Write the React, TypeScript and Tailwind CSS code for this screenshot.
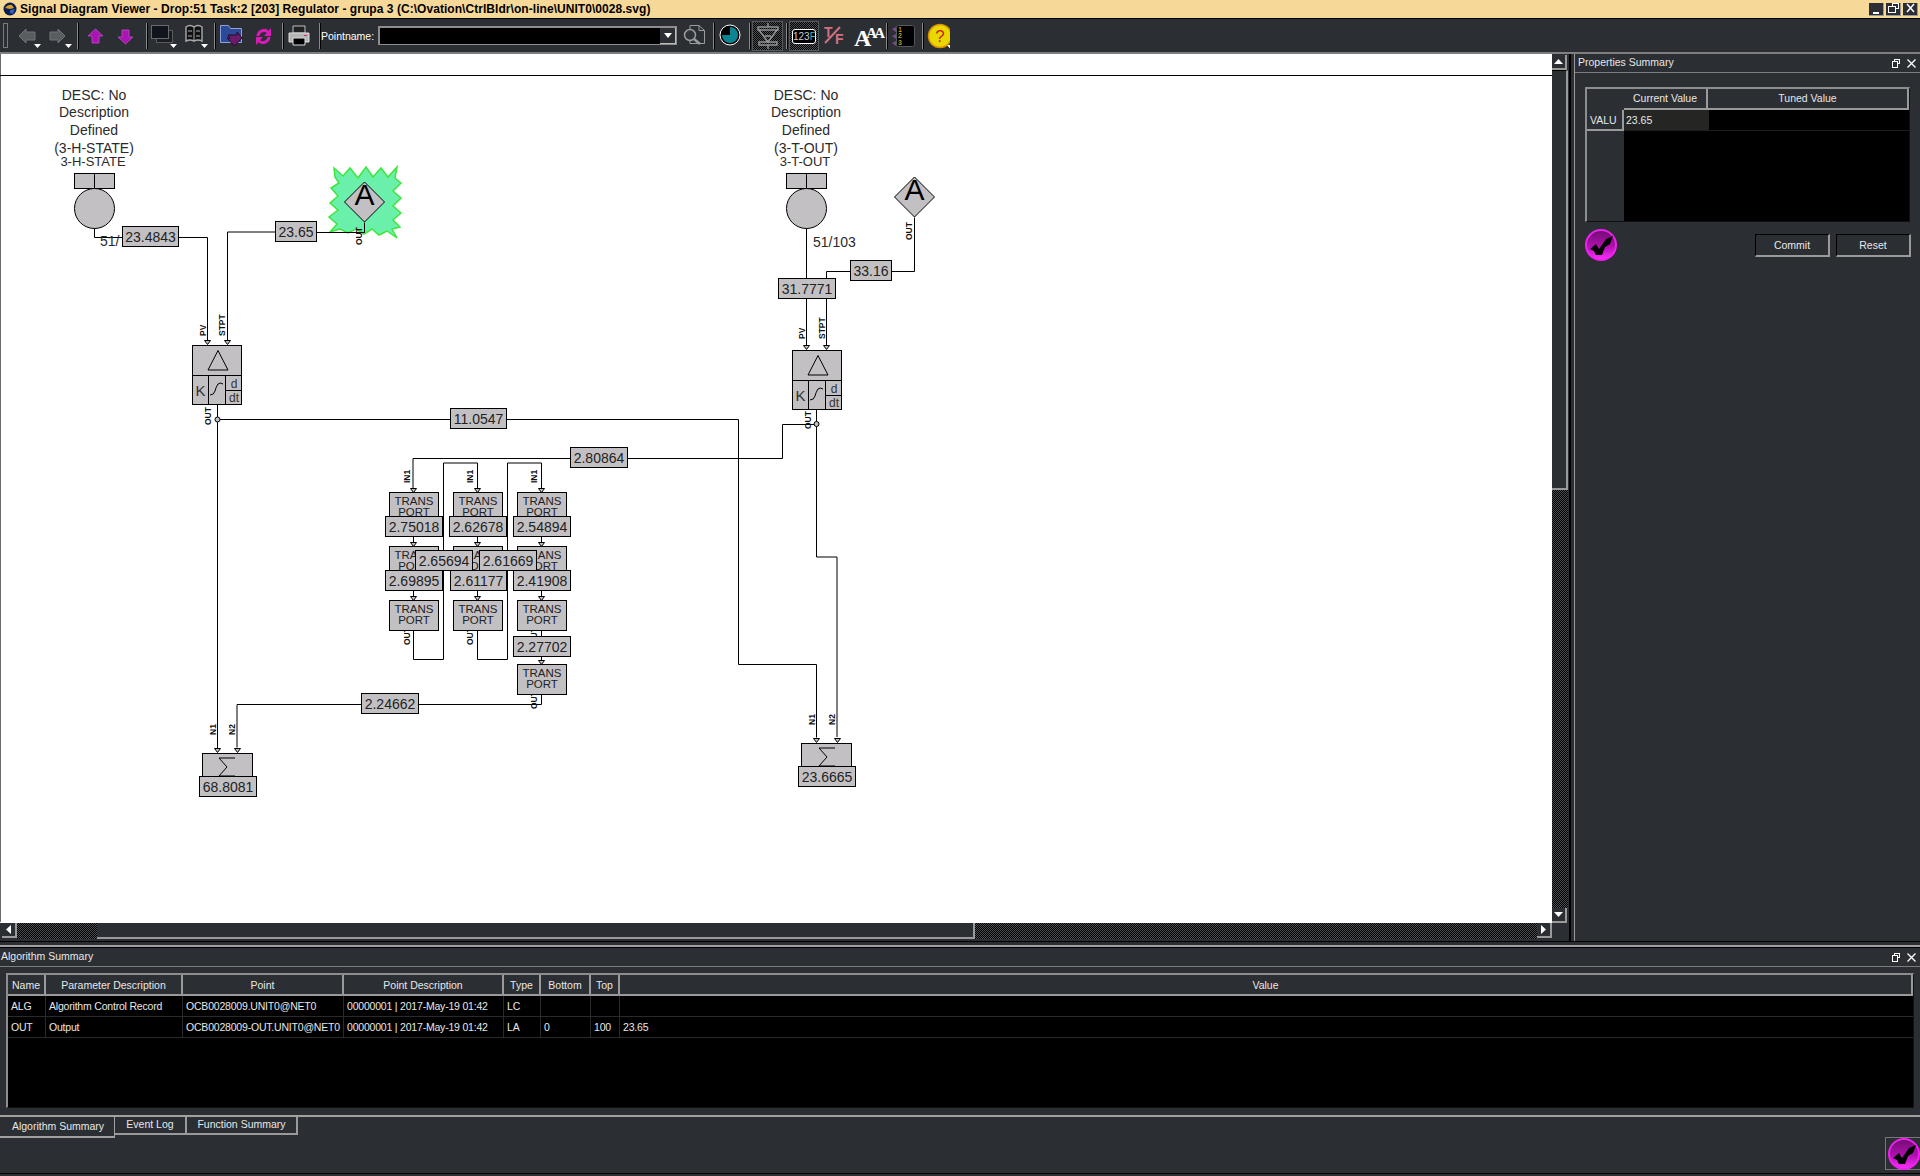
import React from 'react';

const ui = "font-['Liberation_Sans',Arial,sans-serif]";

function TitleBtn({ kind }: { kind: 'min' | 'max' | 'close' }) {
  return (
    <div className="w-[15px] h-[13px] bg-[#2b2e33] border-r border-b border-[#9a9a9a] flex items-center justify-center">
      <svg width="13" height="11" viewBox="0 0 13 11" fill="none" stroke="#fff" strokeWidth="1.5" shapeRendering="crispEdges">
        {kind === 'min' && <path d="M3 9.5h6" strokeWidth="2" />}
        {kind === 'max' && <path d="M5.5 3V.5h6v5H9M1.5 3.5h7v6h-7z" />}
        {kind === 'close' && <path d="M3 1l7 8M10 1L3 9" shapeRendering="auto" />}
      </svg>
    </div>
  );
}

function Sep() {
  return <div className="w-[1px] h-[26px] bg-[#8a8a8a] border-r border-black box-content" />;
}

function Caret() {
  return <path d="M0 0h7l-3.5 4z" fill="#fff" />;
}

function Toolbar() {
  return (
    <div className="h-[35px] bg-[#2b2e33] relative flex items-center shrink-0 border-b-2 border-[#7f7f7f]">
      <div className="absolute left-[3px] top-[4px] w-[5px] h-[25px] border border-[#7a7a7a]" />
      <svg className="absolute left-0 top-0" width="720" height="31" viewBox="0 19 720 31">
        {/* back / forward */}
        <path d="M19 36l7-7v3h9v8h-9v3z" fill="#5a5d60" stroke="#72757a" />
        <path d="M65 36l-7-7v3h-8v8h8v3z" fill="#5a5d60" stroke="#72757a" />
        <g transform="translate(34 44)"><Caret /></g>
        <g transform="translate(65 44)"><Caret /></g>
        {/* up / down */}
        <path d="M95.5 29l7.5 7h-4v7h-7v-7h-4z" fill="#a815b0" stroke="#d050d8" strokeWidth="0.7" />
        <path d="M125.5 44l7.5-7h-4v-7h-7v7h-4z" fill="#a815b0" stroke="#d050d8" strokeWidth="0.7" />
        {/* windows */}
        <rect x="156.5" y="30.5" width="16" height="12" fill="#1b1d22" stroke="#585b5e" />
        <rect x="151.5" y="25.5" width="17" height="13" fill="#11141c" stroke="#686b6e" />
        <g transform="translate(170 44)"><Caret /></g>
        {/* book */}
        <path d="M186 27q4-3 8 0q4-3 8 0v14q-4-2-8 0q-4-2-8 0z" fill="#111" stroke="#a9abad" strokeWidth="1.4" />
        <path d="M194 27v14M188 31h4M196 31h4M188 36h4M196 36h4" stroke="#a9abad" />
        <g transform="translate(201 44)"><Caret /></g>
        {/* folder */}
        <path d="M220.5 28.5v-3h8l2 3h11v14h-21z" fill="#2d4a96" stroke="#8fa2dc" />
        <path d="M228 35h9v-3l5 6-7.500 8-7.500-8h3z" fill="#6a1c6a" stroke="#240a24" />
        {/* sync */}
        <g fill="#d81bb8">
          <path d="M258 36a6 6 0 0 1 10-4" fill="none" stroke="#d81bb8" strokeWidth="3" />
          <path d="M271 28v8h-7z" />
          <path d="M269 37a6 6 0 0 1-10 4" fill="none" stroke="#d81bb8" strokeWidth="3" />
          <path d="M256 45v-8h7z" />
        </g>
        {/* printer */}
        <path d="M293 26h12v7h-12z" fill="#222" stroke="#c0c0c0" />
        <path d="M289 33h20v9h-20z" fill="#b5b5b5" stroke="#ddd" />
        <path d="M293 38h12v7h-12z" fill="#000" stroke="#ddd" />
        <rect x="304" y="35" width="3" height="1" fill="#d03080" />
      </svg>
      <div className="absolute left-[77px] top-[4px]"><Sep /></div>
      <div className="absolute left-[146px] top-[4px]"><Sep /></div>
      <div className="absolute left-[214px] top-[4px]"><Sep /></div>
      <div className="absolute left-[282px] top-[4px]"><Sep /></div>
      <div className="absolute left-[319px] top-[4px]"><Sep /></div>
      <span className={`absolute left-[321px] top-[10px] text-[10.5px] leading-[14px] text-white ${ui}`}>Pointname:</span>
      <div className="absolute left-[378px] top-[7px] w-[299px] h-[19px] bg-black border-t-2 border-l-2 border-[#8d8d8d] border-r border-b flex justify-end">
        <div className="w-[16px] h-[16px] bg-[#2b2e33] border-r border-b border-[#bbb] flex items-center justify-center">
          <svg width="8" height="5"><path d="M0 0h8l-4 5z" fill="#fff" /></svg>
        </div>
      </div>
      <svg className="absolute left-[680px] top-0" width="270" height="31" viewBox="680 19 270 31">
        {/* find */}
        <path d="M690 25.500h9l5.500 5v13h-14.500z" fill="#2b2e33" stroke="#9a9c9f" />
        <path d="M699 25.500v5h5.500" fill="none" stroke="#9a9c9f" />
        <circle cx="690" cy="35" r="5.500" fill="#30343a" stroke="#9a9c9f" strokeWidth="1.5" />
        <path d="M694 39l6 5" stroke="#9a9c9f" strokeWidth="2.500" />
        {/* clock */}
        <circle cx="730" cy="35" r="10" fill="#000" stroke="#fff" strokeWidth="1" />
        <path d="M730 35v-8a8 8 0 1 1-8 8z" fill="#0c8492" />
      </svg>
      <div className="absolute left-[713px] top-[4px]"><Sep /></div>
      <div className="absolute left-[749px] top-[4px]"><Sep /></div>
      <div className="absolute left-[752px] top-[2px] w-[31px] h-[30px] border border-[#55585c] bg-[repeating-conic-gradient(#000_0_25%,#4a4d52_0_50%)] bg-[length:2px_2px] flex items-center justify-center">
        <svg width="24" height="26" viewBox="0 0 24 26" fill="none" stroke="#9a9a9a" strokeWidth="1.4">
          <path d="M12 0v4M12 22v4" />
          <rect x="2" y="4" width="20" height="3" />
          <rect x="3" y="19" width="18" height="3" />
          <path d="M3 7l9 12L21 7M9 13h6" />
        </svg>
      </div>
      <div className="absolute left-[786px] top-[4px]"><Sep /></div>
      <div className="absolute left-[789px] top-[2px] w-[30px] h-[30px] border border-[#55585c] bg-[repeating-conic-gradient(#000_0_25%,#4a4d52_0_50%)] bg-[length:2px_2px] flex items-center justify-center">
        <div className={`w-[24px] h-[15px] rounded-[3px] border border-white bg-black text-[10px] leading-[13px] text-center text-[#ccc] ${ui}`}>
          123<span className="text-[#3fb7b7]">F</span>
        </div>
      </div>
      <svg className="absolute left-[820px] top-0" width="130" height="31" viewBox="820 19 130 31" fontFamily="Liberation Serif, serif">
        <text x="824" y="37" fontSize="14" fontWeight="700" fill="#d07080" fontFamily="Liberation Sans, sans-serif">T</text>
        <path d="M825 43l15-16" stroke="#d07080" strokeWidth="2" />
        <text x="835" y="44" fontSize="14" fontWeight="700" fill="#d07080" fontFamily="Liberation Sans, sans-serif">F</text>
        <text x="854" y="46" fontSize="24" fontWeight="700" fill="#fff" letterSpacing="-5">
          A<tspan fontSize="15" dy="-8" letterSpacing="-3">AA</tspan>
        </text>
        {/* numbered list */}
        <rect x="896.500" y="25.500" width="18" height="21" rx="2" fill="#000" stroke="#55585c" />
        <g fill="#7a4a8a"><path d="M892 29l4-2v5zM892 36l4-2v5zM892 43l4-2v5z" /></g>
        <g fontFamily="Liberation Sans, sans-serif" fontSize="7" fontWeight="700" fill="#b8962a">
          <text x="898" y="32">1</text>
          <text x="898" y="38">2</text>
          <text x="898" y="45">3</text>
        </g>
        {/* help */}
        <circle cx="940" cy="36" r="11.500" fill="#e8d800" stroke="#d89000" strokeWidth="1.500" />
        <text x="940" y="42" textAnchor="middle" fontSize="17" fill="#d01818" fontFamily="Liberation Sans, sans-serif">?</text>
        <g transform="translate(947 45)"><Caret /></g>
      </svg>
      <div className="absolute left-[886px] top-[4px]"><Sep /></div>
      <div className="absolute left-[922px] top-[4px]"><Sep /></div>
    </div>
  );
}

function ValueBox({ x, y, w, label }: { x: number; y: number; w: number; label: string }) {
  return (
    <g>
      <rect x={x + 0.5} y={y + 0.5} width={w} height={20} fill="#c2c0c2" stroke="#000" />
      <text x={x + w / 2 + 0.5} y={y + 16} textAnchor="middle" fontSize="14" fill="#222">{label}</text>
    </g>
  );
}

function Transport({ x, y, h = 30 }: { x: number; y: number; h?: number }) {
  return (
    <g>
      <rect x={x + 0.5} y={y + 0.5} width={49} height={h} fill="#c2c0c2" stroke="#000" />
      <text x={x + 25} y={y + 13} textAnchor="middle" fontSize="11.500" fill="#222">TRANS</text>
      <text x={x + 25} y={y + 24} textAnchor="middle" fontSize="11.500" fill="#222">PORT</text>
    </g>
  );
}

function Pin({ x, y }: { x: number; y: number }) {
  return <path d={`M${x - 2.5} ${y + 0.5}h6l-3 4z`} fill="#c2c0c2" stroke="#000" strokeWidth="1" />;
}

function VLabel({ x, y, label }: { x: number; y: number; label: string }) {
  return (
    <text transform={`translate(${x} ${y}) rotate(-90)`} fontSize="8.500" fontWeight="700" fill="#111">{label}</text>
  );
}

function Desc({ cx, name }: { cx: number; name: string }) {
  return (
    <g fontSize="14" fill="#2a2a2a" textAnchor="middle">
      <text x={cx} y={100}>DESC: No</text>
      <text x={cx} y={117}>Description</text>
      <text x={cx} y={135}>Defined</text>
      <text x={cx} y={153}>({name})</text>
      <text x={cx - 1} y={166} fontSize="13">{name}</text>
      <rect x={cx - 20 + 0.5} y={173.5} width={40} height={15} fill="#c2c0c2" stroke="#000" />
      <path d={`M${cx + 0.5} 173v16`} stroke="#000" />
      <circle cx={cx + 0.5} cy={208.5} r={20} fill="#c2c0c2" stroke="#000" />
    </g>
  );
}

function Controller({ x, y }: { x: number; y: number }) {
  return (
    <g fill="none" stroke="#000">
      <rect x={x + 0.5} y={y + 0.5} width={49} height={59} fill="#c2c0c2" />
      <path d={`M${x} ${y + 30.500}h50M${x + 16.500} ${y + 30}v29M${x + 33.500} ${y + 30}v29M${x + 34} ${y + 45.500}h16`} />
      <path d={`M${x + 26} ${y + 5.500}l10 19.500h-20z`} />
      <path d={`M${x + 18} ${y + 50}q4 0 5-4t3-7q2-2 5 0`} />
      <text x={x + 8.500} y={y + 51} textAnchor="middle" fontSize="15" fill="#333" stroke="none">K</text>
      <text x={x + 42} y={y + 43} textAnchor="middle" fontSize="12" fill="#333" stroke="none">d</text>
      <text x={x + 42} y={y + 57} textAnchor="middle" fontSize="12" fill="#333" stroke="none">dt</text>
    </g>
  );
}

function Sum({ x, y, sx, sy }: { x: number; y: number; sx: number; sy: number }) {
  return (
    <g>
      <rect x={x + 0.5} y={y + 0.5} width={50} height={30} fill="#c2c0c2" stroke="#000" />
      <path d={`M${sx + 16} ${sy + 1}h-16l8 9-8 9h16`} fill="none" stroke="#000" />
    </g>
  );
}

function Diamond({ cx, cy, baseline }: { cx: number; cy: number; baseline: number }) {
  return (
    <g>
      <path d={`M${cx} ${cy - 20}l20 20-20 20-20-20z`} fill="#c2c0c2" stroke="#000" />
      <text x={cx} y={baseline} textAnchor="middle" fontSize="30" fill="#000">A</text>
    </g>
  );
}

function Diagram() {
  const wires = [
    'M94.5 228v9.500h28', 'M178 237.500h29.500v103', 'M227.500 340v-108h48', 'M316 232.500h48.500v-10',
    'M217.500 404v344', 'M217.500 419.500h521v245h78v73', 'M806.500 228v50', 'M850 271.500h-23.500v7',
    'M891 271.500h23.500v-54', 'M806.500 299v46', 'M826.500 299v46', 'M816.500 409v148h20.500v180',
    'M816.500 424.500h-34v34h-369.500v30', 'M413.500 522v24', 'M477.500 522v24', 'M541.500 522v24',
    'M413.500 576v24', 'M477.500 576v24', 'M541.500 576v24', 'M413.500 630v29.500h30v-196.500h34v25',
    'M477.500 630v29.500h30v-196.500h34v25', 'M541.500 630v6', 'M541.500 657v7', 'M541.500 695v9.500h-124',
    'M361 704.500h-124v43',
  ];
  const glow =
    'M335 177L334 168L343 176L350 168L358 178L366 167L373 177L381 168L388 177L397 167L395 178L401 183L393 191L401 198L393 206L401 213L393 220L400 227L392 229L397 238L387 231L379 235L372 229L364 234L356 229L348 233L340 229L330 232L337 224L329 217L338 210L330 203L338 196L331 188L339 183z';
  return (
    <svg width="1552" height="868" viewBox="0 54 1552 868" fontFamily="Liberation Sans, Arial, sans-serif" className="block">
      <path d="M0.500 54v869" stroke="#6a6a6a" />
      <path d="M0 75.500h1552" stroke="#000" />
      <path d={glow} fill="#6af0aa" stroke="#3de63d" strokeWidth="1.500" />
      <g fill="none" stroke="#000">
        {wires.map((d) => <path key={d} d={d} />)}
      </g>
      <Desc cx={94} name="3-H-STATE" />
      <Desc cx={806} name="3-T-OUT" />
      <text x={100} y={246} fontSize="14" fill="#2a2a2a">51/</text>
      <text x={813} y={247} fontSize="14" fill="#2a2a2a">51/103</text>
      <Diamond cx={364.5} cy={202} baseline={205} />
      <Diamond cx={914.5} cy={197} baseline={200} />
      <Controller x={192} y={345} />
      <Controller x={792} y={350} />
      {[[207, 340], [227, 340], [806, 345], [826, 345], [413, 488], [477, 488], [541, 488], [413, 542], [477, 542], [541, 542], [413, 596], [477, 596], [541, 596], [541, 660], [217, 748], [237, 748], [816, 738], [837, 738]].map(([x, y]) => (
        <Pin key={`${x}-${y}`} x={x} y={y} />
      ))}
      <circle cx={217.5} cy={419.5} r={2.5} fill="#c2c0c2" stroke="#000" />
      <circle cx={816.5} cy={424} r={2.5} fill="#c2c0c2" stroke="#000" />
      <VLabel x={206} y={336} label="PV" />
      <VLabel x={225} y={336} label="STPT" />
      <VLabel x={805} y={339} label="PV" />
      <VLabel x={825} y={339} label="STPT" />
      <VLabel x={211} y={425} label="OUT" />
      <VLabel x={811} y={429} label="OUT" />
      <VLabel x={362} y={245} label="OUT" />
      <VLabel x={912} y={240} label="OUT" />
      {[410, 473, 537].map((x) => <VLabel key={x} x={x} y={483} label="IN1" />)}
      <VLabel x={410} y={645} label="OUT" />
      <VLabel x={473} y={645} label="OUT" />
      <VLabel x={537} y={645} label="OUT" />
      <VLabel x={537} y={709} label="OUT" />
      <VLabel x={216} y={735} label="N1" />
      <VLabel x={235} y={735} label="N2" />
      <VLabel x={815} y={725} label="N1" />
      <VLabel x={835} y={725} label="N2" />
      {[389, 453, 517].flatMap((x) => [492, 546, 600].map((y) => <Transport key={`${x}${y}`} x={x} y={y} />))}
      <Transport x={517} y={664} />
      <Sum x={202} y={753} sx={219} sy={757} />
      <Sum x={801} y={743} sx={819} sy={747} />
      <ValueBox x={122} y={226} w={56} label="23.4843" />
      <ValueBox x={275} y={221} w={41} label="23.65" />
      <ValueBox x={778} y={278} w={57} label="31.7771" />
      <ValueBox x={850} y={260} w={41} label="33.16" />
      <ValueBox x={450} y={408} w={56} label="11.0547" />
      <ValueBox x={570} y={447} w={57} label="2.80864" />
      <ValueBox x={385} y={516} w={57} label="2.75018" />
      <ValueBox x={449} y={516} w={57} label="2.62678" />
      <ValueBox x={513} y={516} w={57} label="2.54894" />
      <ValueBox x={385} y={570} w={57} label="2.69895" />
      <ValueBox x={450} y={570} w={56} label="2.61177" />
      <ValueBox x={513} y={570} w={57} label="2.41908" />
      <ValueBox x={415} y={550} w={57} label="2.65694" />
      <ValueBox x={479} y={550} w={57} label="2.61669" />
      <ValueBox x={513} y={636} w={57} label="2.27702" />
      <ValueBox x={361} y={693} w={57} label="2.24662" />
      <ValueBox x={199} y={776} w={57} label="68.8081" />
      <ValueBox x={798} y={766} w={57} label="23.6665" />
    </svg>
  );
}

function ScrollBtn({ dir }: { dir: 'up' | 'down' | 'left' | 'right' }) {
  return (
    <div className="w-[15px] h-[15px] shrink-0 bg-[#2b2e33] border-r-2 border-b-2 border-[#9a9a9a] flex items-center justify-center">
      <svg width="9" height="9" viewBox="0 0 9 9" fill="#fff">
        {dir === 'up' && <path d="M0 7h9L4.500 2z" />}
        {dir === 'down' && <path d="M0 2h9L4.500 7z" />}
        {dir === 'left' && <path d="M7 0v9L2 4.500z" />}
        {dir === 'right' && <path d="M2 0v9l5-4.500z" />}
      </svg>
    </div>
  );
}

function Check({ size, id }: { size: number; id: string }) {
  return (
    <svg width={size} height={size} viewBox="0 0 32 32">
      <defs>
        <linearGradient id={id} x1="0" y1="0" x2="0" y2="1">
          <stop offset="0" stopColor="#700c70" />
          <stop offset="0.55" stopColor="#b010b0" />
          <stop offset="1" stopColor="#ff30ff" />
        </linearGradient>
      </defs>
      <circle cx="16" cy="16" r="15" fill={`url(#${id})`} stroke="#f020f0" strokeWidth="2" />
      <path d="M5 20L11 15L14 20L21 10L28 7L25 15L20 18L17 26L11 26L9 22z" fill="#000" />
    </svg>
  );
}

function FloatIcons() {
  return (
    <div className="flex items-center gap-[7px]">
      <svg width="8" height="9" viewBox="0 0 8 9" fill="none" stroke="#fff" shapeRendering="crispEdges">
        <path d="M2.500 2.500V.5h5v4H5.500M.5 2.500h5v6h-5z" />
      </svg>
      <svg width="9" height="9" viewBox="0 0 9 9" stroke="#fff" strokeWidth="1.300"><path d="M.5.5l8 8M8.500.5l-8 8" /></svg>
    </div>
  );
}

function PropertiesPanel() {
  return (
    <div className={`flex-1 flex flex-col text-[10.5px] text-[#e8e8e8] ${ui}`}>
      <div className="h-[18px] flex items-center justify-between pl-[3px] pr-[4px] border-b border-[#7d7d7d] box-content">
        <span>Properties Summary</span>
        <FloatIcons />
      </div>
      <div className="mt-[14px] ml-[10px] w-[325px] h-[135px] border-t-2 border-l-2 border-[#8d8d8d] border-r border-b border-r-[#111] border-b-[#111] bg-black flex flex-col">
        <div className="flex h-[21px] bg-[#2b2e33]">
          <div className="w-[37px]" />
          <div className="w-[84px] border-r-2 border-b-2 border-[#9a9a9a] text-center leading-[19px]">Current Value</div>
          <div className="flex-1 border-r-2 border-b-2 border-[#9a9a9a] text-center leading-[19px]">Tuned Value</div>
        </div>
        <div className="flex flex-1">
          <div className="w-[37px] bg-[#2b2e33]">
            <div className="h-[21px] border-r-2 border-b-2 border-[#9a9a9a] pl-[3px] leading-[20px]">VALU</div>
          </div>
          <div className="flex-1">
            <div className="h-[21px] flex border-b border-[#1d1d1d]">
              <div className="w-[85px] bg-[#252623] pl-[2px] leading-[20px]">23.65</div>
            </div>
          </div>
        </div>
      </div>
      <div className="flex items-center mt-[11px] ml-[10px] h-[24px]">
        <Check size={32} id="check-props" />
        <div className="ml-auto mr-[9px] flex gap-[6px]">
          <div className="w-[75px] h-[23px] border-t border-l border-black border-r-2 border-b-2 border-r-[#9a9a9a] border-b-[#9a9a9a] text-center leading-[21px]">Commit</div>
          <div className="w-[75px] h-[23px] border-t border-l border-black border-r-2 border-b-2 border-r-[#9a9a9a] border-b-[#9a9a9a] text-center leading-[21px]">Reset</div>
        </div>
      </div>
    </div>
  );
}

const cols = [
  { name: 'Name', w: 'w-[38px]' },
  { name: 'Parameter Description', w: 'w-[137px]' },
  { name: 'Point', w: 'w-[161px]' },
  { name: 'Point Description', w: 'w-[160px]' },
  { name: 'Type', w: 'w-[37px]' },
  { name: 'Bottom', w: 'w-[50px]' },
  { name: 'Top', w: 'w-[29px]' },
];

const rows = [
  ['ALG', 'Algorithm Control Record', 'OCB0028009.UNIT0@NET0', '00000001 | 2017-May-19 01:42', 'LC', '', '', ''],
  ['OUT', 'Output', 'OCB0028009-OUT.UNIT0@NET0', '00000001 | 2017-May-19 01:42', 'LA', '0', '100', '23.65'],
];

function AlgorithmPanel() {
  return (
    <div className={`h-[231px] shrink-0 flex flex-col bg-[#2b2e33] border-t-2 border-[#a0a0a0] text-[10.5px] text-[#e8e8e8] ${ui}`}>
      <div className="h-[20px] border-t border-black border-b border-b-[#7d7d7d] flex items-center justify-between pl-[1px] pr-[4px] shrink-0">
        <span>Algorithm Summary</span>
        <FloatIcons />
      </div>
      <div className="mt-[6px] ml-[6px] mr-[6px] h-[135px] border-t-2 border-l-2 border-[#8d8d8d] border-r border-b border-r-[#111] border-b-[#111] bg-black flex flex-col shrink-0">
        <div className="flex h-[21px] bg-[#2b2e33] shrink-0">
          {cols.map((c) => (
            <div key={c.name} className={`${c.w} border-r-2 border-b-2 border-[#9a9a9a] text-center leading-[20px] truncate`}>{c.name}</div>
          ))}
          <div className="flex-1 border-r-2 border-b-2 border-[#9a9a9a] text-center leading-[20px]">Value</div>
        </div>
        {rows.map((r) => (
          <div key={r[0]} className="flex h-[21px] border-b border-[#2a2a2a] shrink-0 tracking-[-0.2px]">
            {cols.map((c, i) => (
              <div key={c.name} className={`${c.w} border-r border-[#2a2a2a] pl-[3px] leading-[20px] whitespace-nowrap overflow-hidden`}>{r[i]}</div>
            ))}
            <div className="flex-1 pl-[3px] leading-[20px]">{r[7]}</div>
          </div>
        ))}
      </div>
      <div className="mt-[7px] border-t-2 border-[#a0a0a0] flex-1 relative">
        <div className="flex items-start">
          <div className="w-[115px] h-[21px] border-b-2 border-r border-[#a0a0a0] text-center leading-[19px] pl-[2px]">Algorithm Summary</div>
          <div className="w-[72px] h-[18px] border-r-2 border-b-2 border-[#9a9a9a] text-center leading-[15px]">Event Log</div>
          <div className="w-[111px] h-[18px] border-r-2 border-b-2 border-[#9a9a9a] text-center leading-[15px]">Function Summary</div>
        </div>
        <div className="absolute right-0 top-[20px] border border-[#777] border-r-0 w-[35px] h-[33px] flex items-center justify-end">
          <Check size={32} id="check-algo" />
        </div>
      </div>
      <div className="h-[3px] border-t border-black shrink-0" />
    </div>
  );
}

export default function App() {
  return (
    <div className="w-[1920px] h-[1176px] bg-[#2b2e33] flex flex-col overflow-hidden">
      <div className={`h-[19px] bg-[#f6d998] border-b border-black flex items-center shrink-0 relative ${ui}`}>
        <svg className="ml-[3px] shrink-0" width="14" height="14" viewBox="0 0 14 14">
          <circle cx="7" cy="7" r="6.500" fill="#0c1c50" />
          <path d="M2 6q3-4 7-3l2 3-4 1z" fill="#d8a020" />
          <path d="M7 8l5-1-2 5-3-1z" fill="#3060c0" />
        </svg>
        <span className="ml-[3px] text-[12px] font-bold text-black whitespace-nowrap tracking-[0.05px]">
          Signal Diagram Viewer - Drop:51 Task:2 [203] Regulator - grupa 3 (C:\Ovation\CtrlBldr\on-line\UNIT0\0028.svg)
        </span>
        <div className="ml-auto mr-[2px] flex gap-[2px]">
          <TitleBtn kind="min" />
          <TitleBtn kind="max" />
          <TitleBtn kind="close" />
        </div>
      </div>
      <Toolbar />
      <div className="h-[891px] shrink-0 flex flex-col">
        <div className="h-[888px] flex border-b border-black">
          <div className="w-[1568px] flex flex-col">
            <div className="flex h-[869px]">
              <div className="w-[1552px] bg-white overflow-hidden">
                <Diagram />
              </div>
              <div className="w-[16px] flex flex-col pt-[1px]">
                <ScrollBtn dir="up" />
                <div className="h-[420px] border-r-2 border-b-2 border-[#9a9a9a] bg-[#2b2e33] border-t border-t-black" />
                <div className="flex-1 bg-[repeating-conic-gradient(#000_0_25%,#4a4d52_0_50%)] bg-[length:2px_2px]" />
                <ScrollBtn dir="down" />
              </div>
            </div>
            <div className="flex h-[16px]">
              <div className="w-[2px]" />
              <ScrollBtn dir="left" />
              <div className="w-[80px] bg-[repeating-conic-gradient(#000_0_25%,#4a4d52_0_50%)] bg-[length:2px_2px]" />
              <div className="w-[878px] border-b-2 border-r-2 border-[#9a9a9a]" />
              <div className="flex-1 bg-[repeating-conic-gradient(#000_0_25%,#4a4d52_0_50%)] bg-[length:2px_2px]" />
              <ScrollBtn dir="right" />
              <div className="w-[16px]" />
            </div>
          </div>
          <div className="w-[2px] ml-[1px] bg-black" />
          <div className="w-[1px] ml-[3px] bg-[#9a9a9a]" />
          <PropertiesPanel />
        </div>
      </div>
      <AlgorithmPanel />
    </div>
  );
}
